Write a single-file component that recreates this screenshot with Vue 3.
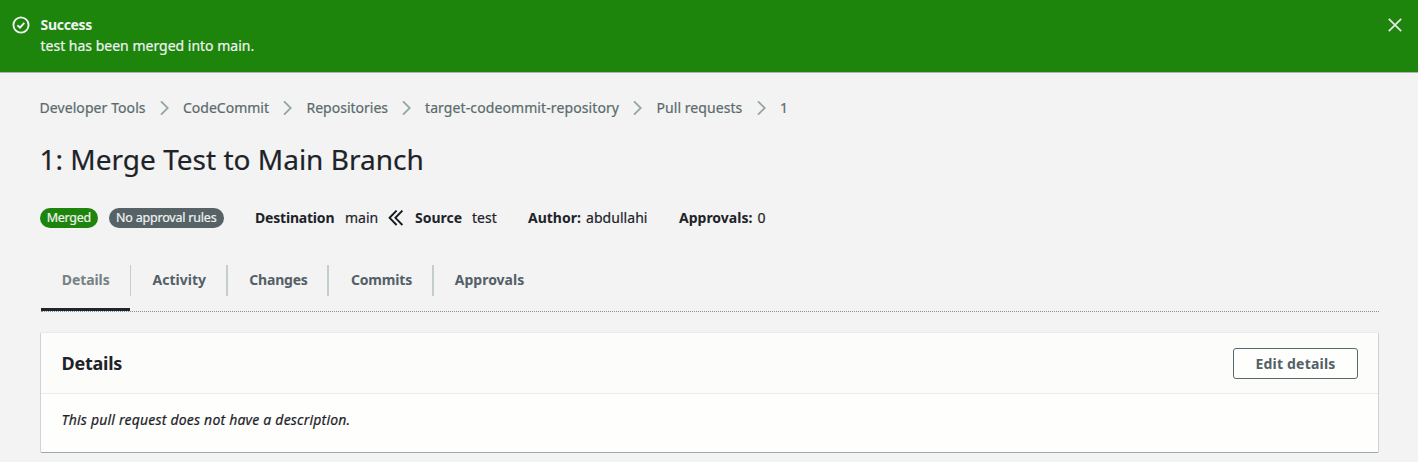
<script setup>
const crumbs = [
  { text: 'Developer Tools', cls: 'c-tools' },
  { text: 'CodeCommit', cls: 'c-commit' },
  { text: 'Repositories', cls: 'c-repos' },
  { text: 'target-codeommit-repository', cls: 'c-repo' },
  { text: 'Pull requests', cls: 'c-pulls' },
  { text: '1', cls: 'c-id' },
]
const tabs = [
  { text: 'Details', cls: 't-details active' },
  { text: 'Activity', cls: 't-activity' },
  { text: 'Changes', cls: 't-changes' },
  { text: 'Commits', cls: 't-commits' },
  { text: 'Approvals', cls: 't-approvals' },
]
</script>

<template>
  <div class="page">
    <div class="flash">
      <svg class="ok" viewBox="0 0 18 18" width="18" height="18">
        <circle cx="9" cy="9" r="7.6" />
        <path d="M5.4 9.2 8 11.6 12.3 6.8" />
      </svg>
      <div class="flash-text">
        <strong>Success</strong>
        <span>test has been merged into main.</span>
      </div>
      <svg class="close" viewBox="0 0 14 14" width="14" height="14">
        <path d="M.8 .8 13.2 13.2M13.2 .8 .8 13.2" />
      </svg>
    </div>

    <main>
      <nav class="crumbs">
        <template v-for="(c, i) in crumbs" :key="c.text">
          <svg v-if="i" class="sep" viewBox="0 0 9 14" width="9" height="14">
            <path d="M1 .3 7.8 7 1 13.7" />
          </svg>
          <a :class="c.cls">{{ c.text }}</a>
        </template>
      </nav>

      <h1>1: Merge Test to Main Branch</h1>

      <div class="meta">
        <span class="badge merged">Merged</span>
        <span class="badge rules">No approval rules</span>
        <b class="m-dest">Destination</b>
        <span class="m-main">main</span>
        <svg class="arrows" viewBox="0 0 16 16" width="16" height="16">
          <path d="M8.6 .6 1.6 7.8l7 7.2M14.4 .6 7.4 7.8l7 7.2" />
        </svg>
        <b class="m-source">Source</b>
        <span class="m-test">test</span>
        <b class="m-author">Author:</b>
        <span class="m-name">abdullahi</span>
        <b class="m-approvals">Approvals:</b>
        <span>0</span>
      </div>

      <div class="tabs">
        <div v-for="t in tabs" :key="t.text" class="tab" :class="t.cls"><span>{{ t.text }}</span></div>
      </div>

      <section class="card">
        <header>
          <h2>Details</h2>
          <button>Edit details</button>
        </header>
        <p>This pull request does not have a description.</p>
      </section>
    </main>
  </div>
</template>

<style>
body {
  background: #f3f3f3;
}
</style>

<style scoped>
.page {
  height: 462px;
  overflow: hidden;
  background: #f3f3f3;
  color: #1d2329;
  font: 14px/20px "Noto Sans", "Open Sans", sans-serif;
  -webkit-text-stroke: 0.2px currentColor;
  white-space: nowrap;
}
b, strong, h2, button, .tab {
  -webkit-text-stroke: 0;
}
svg {
  display: block;
  flex: none;
  fill: none;
}
.flash {
  box-sizing: border-box;
  height: 73px;
  padding: 14px 16px 0 12px;
  display: flex;
  background: #1d850b;
  border-bottom: 1px solid #a9b7b0;
  color: #f0f3f3;
}
.ok {
  margin-top: 2px;
  stroke: #f2f3f8;
  stroke-width: 1.9;
}
.flash-text {
  flex: 1;
  margin-left: 10.5px;
  display: flex;
  flex-direction: column;
}
.flash-text strong {
  line-height: 21px;
  letter-spacing: -0.3px;
}
.flash-text span {
  line-height: 21px;
}
.close {
  margin-top: 4px;
  stroke: #e3e8e6;
  stroke-width: 1.8;
}
main {
  padding: 25px 39px 0 39.5px;
}
.crumbs {
  display: flex;
  align-items: center;
  height: 20px;
  color: #5a6b6c;
}
.sep {
  margin: 0 14.5px 0 13.5px;
  stroke: #95a5a6;
  stroke-width: 1.8;
}
.c-tools { width: 106.5px; letter-spacing: 0.08px; }
.c-commit { width: 86.5px; }
.c-repos { width: 81.5px; }
.c-repo { width: 194.5px; letter-spacing: 0.1px; }
.c-pulls { width: 86.5px; letter-spacing: 0.06px; }
h1 {
  margin: 22px 0 0;
  font-size: 28px;
  line-height: 38px;
  font-weight: 400;
  letter-spacing: 0.01px;
}
.meta {
  display: flex;
  align-items: center;
  height: 22px;
  margin: 29px 0 0;
}
.badge {
  box-sizing: border-box;
  height: 20px;
  border-radius: 10px;
  line-height: 20px;
  font-size: 12.5px;
  text-align: center;
  color: #f0f3f2;
}
.merged {
  width: 58.5px;
  background: #1d850b;
  letter-spacing: -0.3px;
}
.rules {
  width: 115.5px;
  margin-left: 10.5px;
  margin-right: 31px;
  background: #566266;
  letter-spacing: -0.2px;
}
.m-dest { width: 90px; letter-spacing: -0.2px; }
.m-main { width: 33px; }
.arrows {
  margin: 0 11.5px 0 9.5px;
  stroke: #16191f;
  stroke-width: 1.9;
}
.m-source { width: 57px; }
.m-test { width: 56px; }
.m-author { width: 58px; }
.m-name { width: 93px; letter-spacing: 0.05px; }
.m-approvals { width: 78.5px; }
.tabs {
  box-sizing: border-box;
  display: flex;
  height: 58px;
  margin: 25px 0 0 1px;
  border-bottom: 1px dotted #829595;
}
.tab {
  position: relative;
  box-sizing: border-box;
  height: 58px;
  padding-top: 11px;
  color: #545f68;
  font-weight: 700;
  text-align: center;
}
.tab:not(:last-child)::after {
  content: "";
  position: absolute;
  right: 0;
  top: 11px;
  width: 1.5px;
  height: 31px;
  background: #c3cfce;
}
.tab span {
  display: block;
  line-height: 30px;
}
.active {
  color: #748283;
}
.active::before {
  content: "";
  position: absolute;
  left: 0;
  right: 1px;
  bottom: 1px;
  height: 3px;
  background: #20242b;
}
.t-details { width: 90.5px; letter-spacing: -0.1px; }
.t-activity { width: 96.5px; }
.t-changes { width: 101px; padding-left: 1px; letter-spacing: -0.2px; }
.t-commits { width: 105px; padding-left: 1px; letter-spacing: -0.2px; }
.t-approvals { width: 112px; }
.card {
  box-sizing: border-box;
  height: 121px;
  margin-top: 20px;
  background: #fefefd;
  border: 1px solid #ccd5d5;
  border-top-color: #e8ebeb;
  border-bottom: 1.5px solid #9aabab;
  border-radius: 2px;
}
.card header {
  box-sizing: border-box;
  display: flex;
  align-items: center;
  justify-content: space-between;
  height: 61px;
  padding: 0 20px 0 21px;
  background: #fcfcfb;
  border-bottom: 1px solid #ececec;
}
h2 {
  margin: 0;
  font-size: 18px;
  line-height: 24px;
  letter-spacing: -0.25px;
}
button {
  box-sizing: border-box;
  width: 125px;
  height: 31px;
  margin-top: 1px;
  padding: 0;
  background: #fefefd;
  border: 1.5px solid #56686b;
  border-radius: 3px;
  color: #545f68;
  font: 700 14px/28px "Noto Sans", "Open Sans", sans-serif;
  letter-spacing: 0.2px;
}
p {
  margin: 15px 0 0 21px;
  line-height: 22px;
  font-style: italic;
  letter-spacing: 0.2px;
}
</style>
